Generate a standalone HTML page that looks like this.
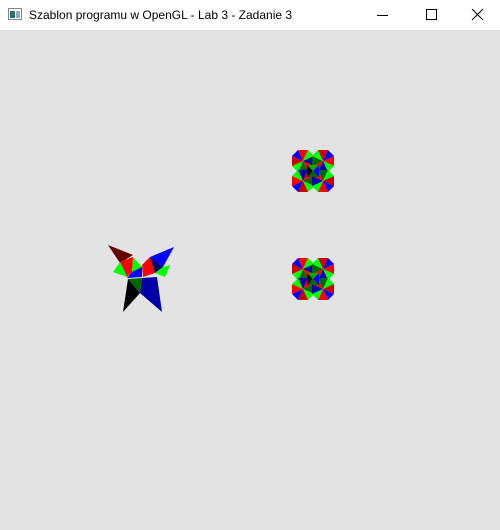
<!DOCTYPE html>
<html><head><style>
html,body{margin:0;padding:0;width:500px;height:530px;overflow:hidden;background:#e3e3e3;font-family:"Segoe UI","Liberation Sans",sans-serif}
.tb{position:absolute;left:0;top:0;width:500px;height:30px;background:#fff}
.t{position:absolute;left:29px;top:8px;font-size:12px;color:#000;white-space:nowrap}
</style></head><body>
<div class="tb">
<svg style="position:absolute;left:8px;top:8px" width="14" height="13"><rect x="0.5" y="0.5" width="13" height="11" fill="#fff" stroke="#7a8a8a"/><rect x="2" y="3" width="5" height="7" fill="#2e6e6e"/><rect x="8" y="3" width="4" height="7" fill="#9ab"/></svg>
<div class="t">Szablon programu w OpenGL - Lab 3 - Zadanie 3</div>
<svg style="position:absolute;left:377px;top:9px" width="110" height="14" stroke="#000" stroke-width="1" fill="none">
<line x1="0" y1="6.5" x2="11" y2="6.5"/>
<rect x="49.5" y="0.5" width="10" height="10"/>
<line x1="95" y1="0" x2="106" y2="11"/><line x1="106" y1="0" x2="95" y2="11"/>
</svg>
</div>
<svg style="position:absolute;left:0;top:0" width="500" height="530">
<defs>
<g id="lobe">
<polygon points="0,0 -11,-5 -5,-11" fill="#0000ff"/>
<polygon points="0,0 -5,-11 5,-11" fill="#ff0000"/>
<polygon points="0,0 5,-11 11,-5" fill="#00ff00"/>
<polygon points="0,0 11,-5 11,5" fill="#0000aa"/>
<polygon points="0,0 11,5 5,11" fill="#ff0000"/>
<polygon points="0,0 5,11 -5,11" fill="#006600"/>
<polygon points="0,0 -5,11 -11,5" fill="#00ff00"/>
<polygon points="0,0 -11,5 -11,-5" fill="#cc0000"/>
</g>
<g id="cl">
<use href="#lobe" x="11" y="11"/>
<use href="#lobe" x="31" y="11" transform="rotate(90 31 11)"/>
<use href="#lobe" x="11" y="31" transform="rotate(-90 11 31)"/>
<use href="#lobe" x="31" y="31" transform="rotate(180 31 31)"/>
<polygon points="15,15 21,21 15,27" fill="#000"/>
<polygon points="15,15 27,15 21,21" fill="#00aa00"/>
<polygon points="27,15 27,27 21,21" fill="#0000ff"/>
<polygon points="15,27 21,21 27,27" fill="#006600"/>
</g>
</defs>
<use href="#cl" x="292" y="150"/>
<use href="#cl" x="292" y="258"/>
<polygon points="108,245 133,255 120,263" fill="#660000"/>
<polygon points="120,262 133,257 132,272 127,277" fill="#ff0000"/>
<polygon points="113,272 120,262 127,277" fill="#00ff00"/>
<polygon points="133,257 142,267 132,272" fill="#00ff00"/>
<polygon points="142,267 132,272 127,278 142,277" fill="#0000ff"/>
<polygon points="142,265 150,257 155,273 143,277" fill="#ff0000"/>
<polygon points="150,257 174,247 163,267" fill="#0000ff"/>
<polygon points="150,257 163,267 155,273" fill="#000066"/>
<polygon points="163,267 170,265 165,277 155,273" fill="#00ff00"/>
<polygon points="123,312 128,279 140,293" fill="#000"/>
<polygon points="128,279 142,278 140,293" fill="#006600"/>
<polygon points="142,278 157,277 162,312 140,293" fill="#0000aa"/>
</svg>
</body></html>
